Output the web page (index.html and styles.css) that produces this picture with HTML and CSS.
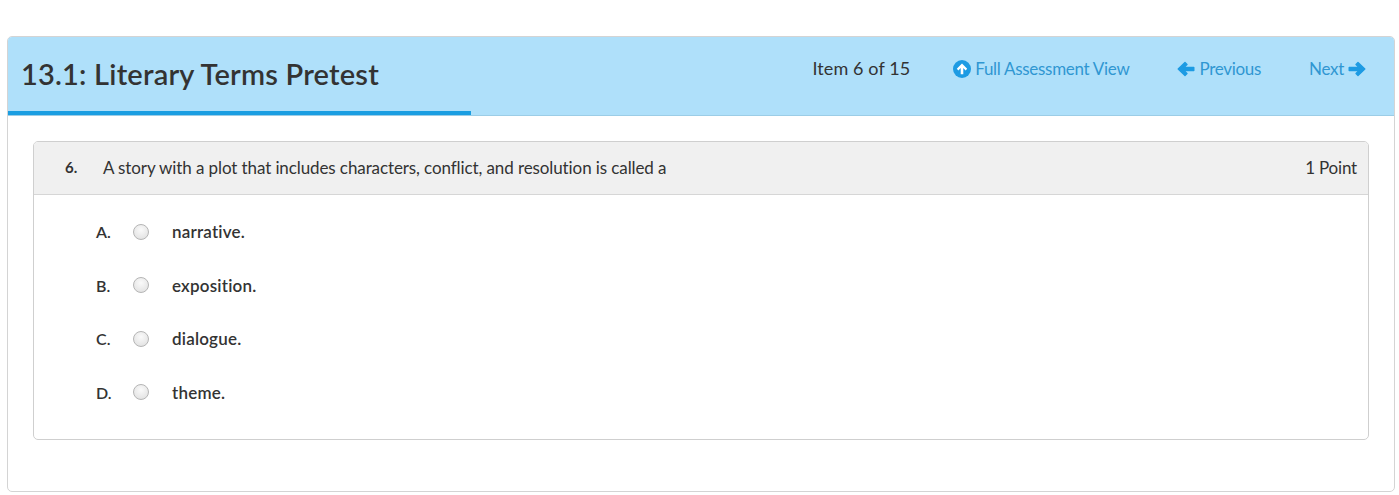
FILE: index.html
```html
<!DOCTYPE html>
<html lang="en">
<head>
<meta charset="utf-8">
<title>13.1: Literary Terms Pretest</title>
<link rel="stylesheet" href="styles.css">
</head>
<body>
<div class="panel">
  <div class="panel-head">
    <div class="head-row">
      <h1 class="title">13.1: Literary Terms Pretest</h1>
      <nav class="nav">
        <span class="item-count">Item 6 of 15</span>
        <a class="nav-link full" href="#">
          <svg class="ico" width="18" height="18" viewBox="0 0 18 18"><circle cx="9" cy="9" r="9" fill="#1d9be3"/><path d="M9 3.6 L14.2 8.8 L12.6 10.4 L10.3 8.1 V14.2 H7.7 V8.1 L5.4 10.4 L3.8 8.8 Z" fill="#fff"/></svg>Full Assessment View</a>
        <a class="nav-link prev" href="#">
          <svg class="ico" width="18" height="16" viewBox="0 0 18 16"><path d="M1.2 8 L8 1.6 L10 3.6 L6.8 6.5 H16.8 V9.5 H6.8 L10 12.4 L8 14.4 Z" fill="#1d9be3" stroke="#1d9be3" stroke-width="1.4" stroke-linejoin="round"/></svg>Previous</a>
        <a class="nav-link next" href="#">Next<svg class="ico" width="18" height="16" viewBox="0 0 18 16"><path d="M16.8 8 L10 1.6 L8 3.6 L11.2 6.5 H1.2 V9.5 H11.2 L8 12.4 L10 14.4 Z" fill="#1d9be3" stroke="#1d9be3" stroke-width="1.4" stroke-linejoin="round"/></svg></a>
      </nav>
    </div>
    <div class="progress" style="width: 463px"></div>
  </div>
  <div class="panel-body">
    <div class="question">
      <div class="q-head">
        <span class="q-num">6.</span>
        <span class="q-text">A story with a plot that includes characters, conflict, and resolution is called a</span>
        <span class="q-points">1 Point</span>
      </div>
      <ul class="options">
        <li class="option"><span class="opt-letter">A.</span><span class="radio"></span><span class="opt-text">narrative.</span></li>
        <li class="option"><span class="opt-letter">B.</span><span class="radio"></span><span class="opt-text">exposition.</span></li>
        <li class="option"><span class="opt-letter">C.</span><span class="radio"></span><span class="opt-text">dialogue.</span></li>
        <li class="option"><span class="opt-letter">D.</span><span class="radio"></span><span class="opt-text">theme.</span></li>
      </ul>
    </div>
  </div>
</div>
</body>
</html>
```
FILE: styles.css
```css
* { box-sizing: border-box; }
html, body { margin: 0; padding: 0; background: #fff; }
body {
  font-family: Lato, "Open Sans", "Liberation Sans", sans-serif;
  color: #333;
  padding: 36px 4px 0 7px;
}
.panel {
  border: 1px solid #d4d4d4;
  border-radius: 5px;
  height: 456px;
  overflow: hidden;
}
.panel-head {
  background: #afe0fa;
  border-bottom: 1px solid #9ccde6;
  height: 79px;
  display: flex;
  flex-direction: column;
}
.head-row {
  flex: 1;
  display: flex;
  align-items: flex-start;
  justify-content: space-between;
}
.title {
  margin: 0;
  padding: 20px 0 0 13px;
  font-size: 29px;
  font-weight: 600;
  letter-spacing: 0.2px;
  line-height: 34px;
  color: #333;
}
.nav {
  display: flex;
  align-items: center;
  padding: 19px 28px 0 0;
  font-size: 18px;
  line-height: 22px;
}
.item-count { color: #333; margin-right: 43px; letter-spacing: 0.1px; }
.nav-link {
  color: #2f97d2;
  text-decoration: none;
  display: flex;
  align-items: center;
  letter-spacing: -0.3px;
  font-size: 17px;
}
.nav-link.full { margin-right: 48px; margin-top: 2px; }
.nav-link.prev { margin-right: 48px; margin-top: 2px; }
.nav-link.next { margin-top: 2px; }
.ico { display: block; flex: none; }
.full .ico { margin-right: 4px; }
.prev .ico { margin-right: 4px; }
.next .ico { margin-left: 4px; }
.progress {
  height: 4px;
  background: #1a9ee2;
  flex: none;
}
.panel-body {
  padding: 25px 25px 0 25px;
}
.question {
  border: 1px solid #cfcfcf;
  border-radius: 5px;
  overflow: hidden;
}
.q-head {
  background: #f0f0f0;
  border-bottom: 1px solid #d6d6d6;
  height: 53px;
  display: flex;
  align-items: center;
  padding: 0 11px 2px 31px;
  font-size: 17px;
}
.q-num { font-weight: 700; width: 38px; font-size: 15px; }
.q-text { flex: 1; letter-spacing: -0.1px; }
.q-points { letter-spacing: -0.2px; }
.options {
  list-style: none;
  margin: 0;
  padding: 10px 0 20px 62px;
}
.option {
  height: 53.5px;
  display: flex;
  align-items: center;
  font-size: 17px;
  font-weight: 600;
  color: #333;
}
.opt-letter { width: 37px; font-size: 16px; }
.radio {
  width: 16px;
  height: 16px;
  border-radius: 50%;
  border: 1px solid #b5b5b5;
  background: radial-gradient(circle at 50% 35%, #fafafa 0%, #e6e6e6 70%, #dcdcdc 100%);
  margin-right: 23px;
}
.opt-text { letter-spacing: 0.2px; }
```
